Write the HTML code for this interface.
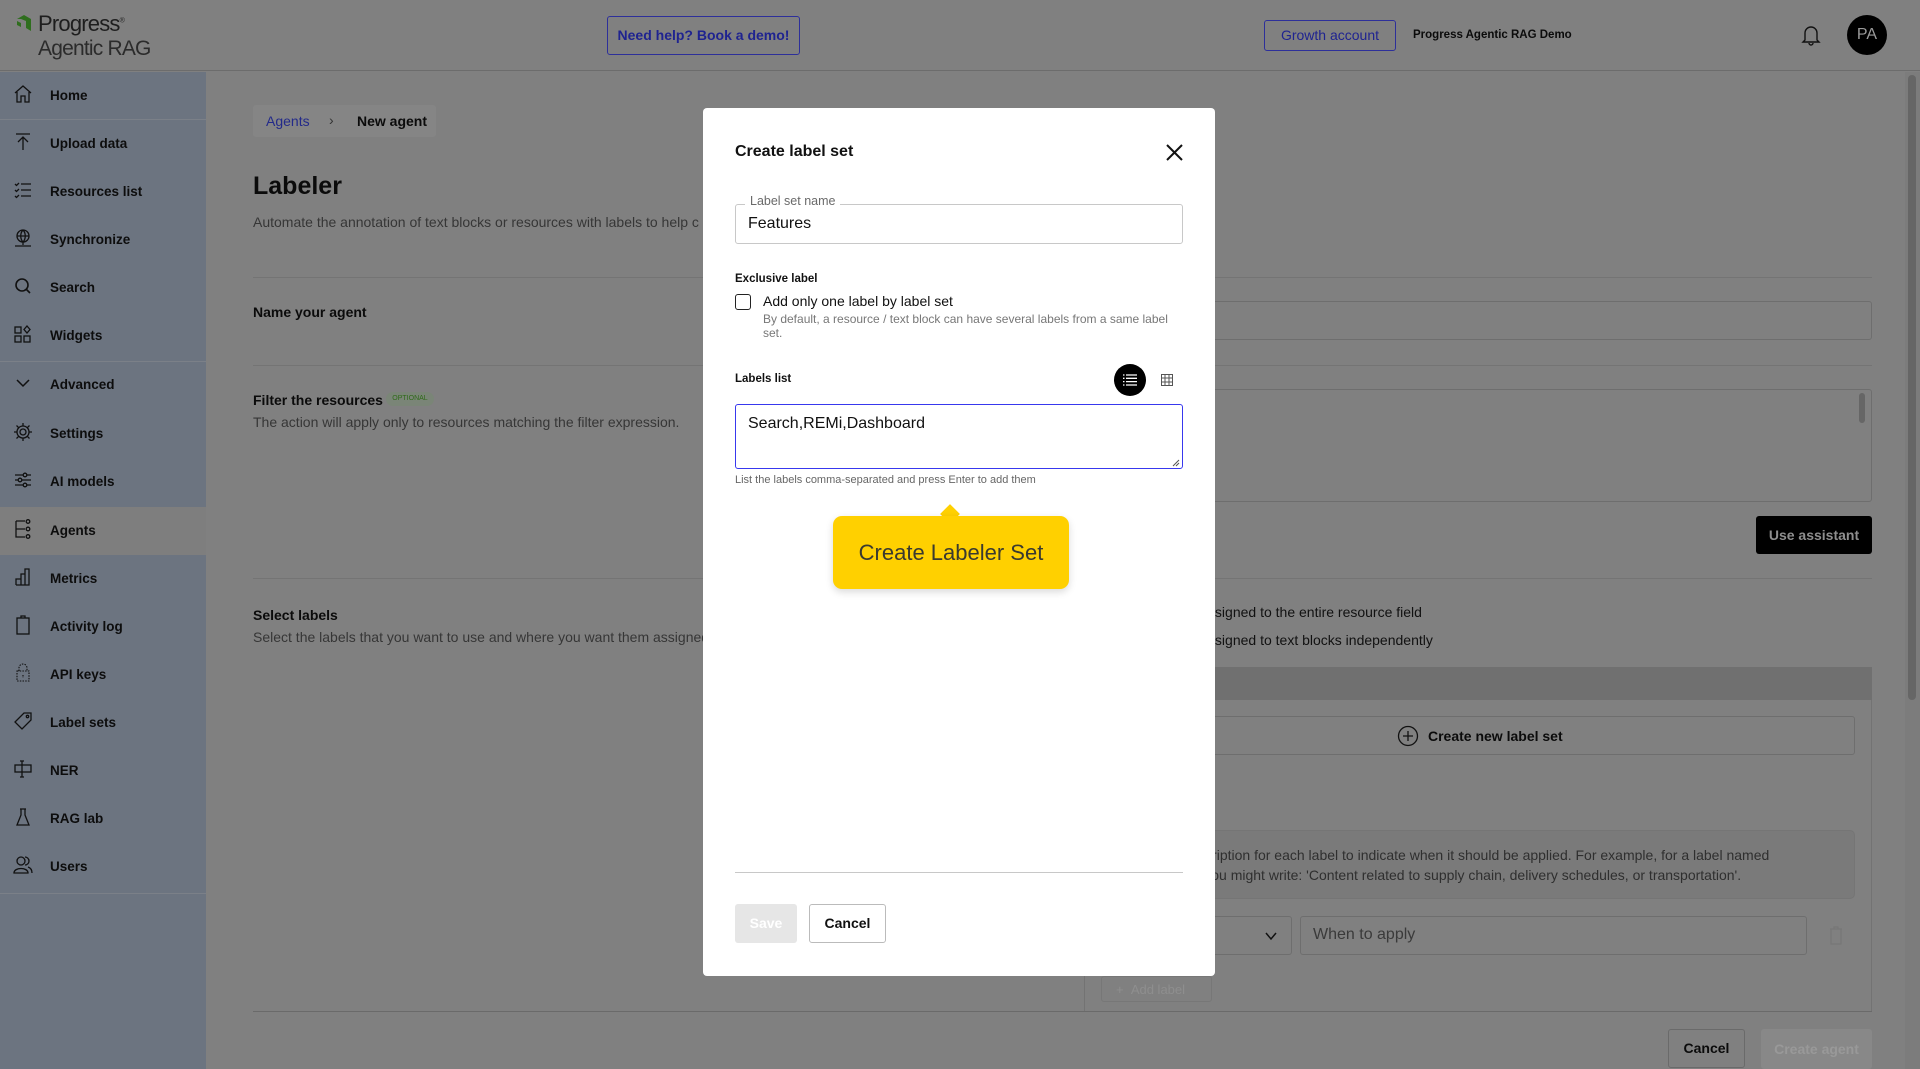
<!DOCTYPE html>
<html><head><meta charset="utf-8"><style>
*{box-sizing:border-box;margin:0;padding:0}
body{width:1920px;height:1069px;overflow:hidden;background:#808080;font-family:"Liberation Sans",Arial,sans-serif;position:relative;color:#0b0b0b}
.a{position:absolute;white-space:nowrap}
.side{position:absolute;left:0;top:72px;width:206px;height:997px;background:#6c7480}
.item{position:absolute;left:0;width:206px;height:48px;font-size:13.5px;font-weight:bold;color:#0d0d0d}
.item span{position:absolute;left:50px;top:16px}
.item svg{position:absolute;left:13px;top:12px}
.hl{position:absolute;left:0;width:206px;height:1px;background:#7b8088}
.btn{position:absolute;border-radius:3px;font-size:14px;font-weight:bold;text-align:center}
</style></head><body>
<div class="a" style="left:0;top:0;width:1920px;height:71px;border-bottom:1px solid #6c6c6c;background:#808080"></div>
<svg class="a" style="left:14px;top:11px" width="22" height="22" viewBox="0 0 22 22"><path d="M3 8 L10 4 L17 8 L17 20 L12 17 L12 10 L7 8 Z" fill="#2f6e1e"/><path d="M3 10 L7 12 L7 16 L3 14Z" fill="#2f6e1e"/></svg>
<div class="a" style="left:38px;top:11px;font-size:22px;color:#1e1e1e;letter-spacing:-0.8px">Progress<sup style="font-size:7px">®</sup></div>
<div class="a" style="left:38px;top:37px;font-size:21px;color:#2b2b2b;letter-spacing:-0.8px">Agentic RAG</div>
<div class="btn" style="left:607px;top:16px;width:193px;height:39px;border:1px solid #2d2f9a;color:#1f2390;line-height:37px;font-size:14px">Need help? Book a demo!</div>
<div class="btn" style="left:1264px;top:20px;width:132px;height:31px;border:1px solid #2d2f9a;color:#1f2390;line-height:29px;font-size:14px;font-weight:normal">Growth account</div>
<div class="a" style="left:1413px;top:29px;font-size:11.5px;font-weight:bold">Progress Agentic RAG Demo</div>
<svg class="a" style="left:1801px;top:24px" width="20" height="22" viewBox="0 0 20 22"><path d="M4 16 V9 a6 6 0 0 1 12 0 V16 L18 18 H2 Z M8 19 a2 2 0 0 0 4 0" fill="none" stroke="#111" stroke-width="1.4"/></svg>
<div class="a" style="left:1847px;top:15px;width:40px;height:40px;border-radius:50%;background:#000;color:#9a9a9a;font-size:16px;text-align:center;line-height:40px">PA</div>
<div class="side"></div>
<div class="a" style="left:0;top:507px;width:206px;height:48px;background:#7e7e7e"></div>
<div class="hl" style="top:119px"></div><div class="hl" style="top:361px"></div><div class="hl" style="top:893px"></div>
<div class="item" style="top:72px"><svg width="20" height="20" viewBox="0 0 20 20" fill="none" stroke="#111" stroke-width="1.3"><path d="M2 9 L10 2 L18 9 M4 8 V18 H8 V12 H12 V18 H16 V8"/></svg><span>Home</span></div>
<div class="item" style="top:120px"><svg width="20" height="20" viewBox="0 0 20 20" fill="none" stroke="#111" stroke-width="1.3"><path d="M3 2 H17 M10 18 V5 M5 10 L10 5 L15 10"/></svg><span>Upload data</span></div>
<div class="item" style="top:168px"><svg width="20" height="20" viewBox="0 0 20 20" fill="none" stroke="#111" stroke-width="1.3"><path d="M8 4 H18 M8 10 H18 M8 16 H18 M2 4 L3.5 5.5 L6 3 M2 10 L3.5 11.5 L6 9 M2 16 L3.5 17.5 L6 15"/></svg><span>Resources list</span></div>
<div class="item" style="top:216px"><svg width="20" height="20" viewBox="0 0 20 20" fill="none" stroke="#111" stroke-width="1.3"><circle cx="10" cy="8" r="6"/><path d="M4 8 H16 M10 2 C7 5 7 11 10 14 C13 11 13 5 10 2 M10 14 V17 M2 18 H18"/></svg><span>Synchronize</span></div>
<div class="item" style="top:264px"><svg width="20" height="20" viewBox="0 0 20 20" fill="none" stroke="#111" stroke-width="1.6"><circle cx="9" cy="9" r="6"/><path d="M13 13 L17 17"/></svg><span>Search</span></div>
<div class="item" style="top:312px"><svg width="20" height="20" viewBox="0 0 20 20" fill="none" stroke="#111" stroke-width="1.3"><rect x="2" y="3" width="6" height="6"/><rect x="2" y="12" width="6" height="6"/><rect x="11" y="12" width="6" height="6"/><path d="M14 2 L17 5.5 L14 9 L11 5.5Z"/></svg><span>Widgets</span></div>
<div class="item" style="top:361px"><svg width="20" height="20" viewBox="0 0 20 20" fill="none" stroke="#111" stroke-width="1.5"><path d="M4 7 L10 13 L16 7"/></svg><span>Advanced</span></div>
<div class="item" style="top:410px"><svg width="20" height="20" viewBox="0 0 20 20" fill="none" stroke="#111" stroke-width="1.3"><circle cx="10" cy="10" r="3"/><path d="M10 1 V4 M10 16 V19 M1 10 H4 M16 10 H19 M3.5 3.5 L5.7 5.7 M14.3 14.3 L16.5 16.5 M3.5 16.5 L5.7 14.3 M14.3 5.7 L16.5 3.5"/><circle cx="10" cy="10" r="6"/></svg><span>Settings</span></div>
<div class="item" style="top:458px"><svg width="20" height="20" viewBox="0 0 20 20" fill="none" stroke="#111" stroke-width="1.3"><path d="M2 5 H18 M2 10 H18 M2 15 H18"/><circle cx="12" cy="5" r="1.8" fill="#6c7480"/><circle cx="7" cy="10" r="1.8" fill="#6c7480"/><circle cx="12" cy="15" r="1.8" fill="#6c7480"/></svg><span>AI models</span></div>
<div class="item" style="top:507px"><svg width="20" height="20" viewBox="0 0 20 20" fill="none" stroke="#111" stroke-width="1.3"><path d="M3 2 V18 H12 M3 2 H12 M3 10 H12"/><circle cx="15" cy="2.5" r="1.8"/><circle cx="15" cy="10" r="1.8"/><circle cx="15" cy="17.5" r="1.8"/></svg><span>Agents</span></div>
<div class="item" style="top:555px"><svg width="20" height="20" viewBox="0 0 20 20" fill="none" stroke="#111" stroke-width="1.3"><path d="M3 18 V12 H8 V18 M8 18 V7 H12 V18 M12 18 V2 H16 V18 H3"/></svg><span>Metrics</span></div>
<div class="item" style="top:603px"><svg width="20" height="20" viewBox="0 0 20 20" fill="none" stroke="#111" stroke-width="1.3"><rect x="4" y="3" width="12" height="16"/><path d="M8 3 V1 H12 V3"/></svg><span>Activity log</span></div>
<div class="item" style="top:651px"><svg width="20" height="20" viewBox="0 0 20 20" fill="none" stroke="#111" stroke-width="1.1" stroke-dasharray="1.5 1.2"><rect x="4" y="8" width="12" height="10"/><path d="M6 8 V5 a4 4 0 0 1 8 0 V8 M10 12 V15"/></svg><span>API keys</span></div>
<div class="item" style="top:699px"><svg width="20" height="20" viewBox="0 0 20 20" fill="none" stroke="#111" stroke-width="1.3"><path d="M11 2 L18 2 L18 9 L9 18 L2 11 Z"/><circle cx="14.5" cy="5.5" r="1.2"/></svg><span>Label sets</span></div>
<div class="item" style="top:747px"><svg width="20" height="20" viewBox="0 0 20 20" fill="none" stroke="#111" stroke-width="1.3"><rect x="2" y="6" width="16" height="7"/><path d="M9 2 V18 M7 2 H11 M7 18 H11"/></svg><span>NER</span></div>
<div class="item" style="top:795px"><svg width="20" height="20" viewBox="0 0 20 20" fill="none" stroke="#111" stroke-width="1.3"><path d="M8 2 V8 L4 18 H16 L12 8 V2 M7 2 H13"/></svg><span>RAG lab</span></div>
<div class="item" style="top:843px"><svg width="20" height="20" viewBox="0 0 20 20" fill="none" stroke="#111" stroke-width="1.3"><circle cx="8" cy="6" r="4"/><path d="M1 18 C1 12 15 12 15 18 Z M12 2 a4 4 0 0 1 0 8 M15 12 C18 13 19 15 19 18"/></svg><span>Users</span></div>
<div class="a" style="left:253px;top:105px;width:183px;height:32px;background:#858585;border-radius:3px"></div>
<div class="a" style="left:266px;top:113px;font-size:14px;color:#232a8a">Agents</div>
<div class="a" style="left:329px;top:112px;font-size:14px;color:#333">›</div>
<div class="a" style="left:357px;top:113px;font-size:14px;font-weight:bold">New agent</div>
<div class="a" style="left:253px;top:172px;font-size:25px;font-weight:bold">Labeler</div>
<div class="a" style="left:253px;top:214px;font-size:14px;color:#363636">Automate the annotation of text blocks or resources with labels to help c</div>
<div class="a" style="left:253px;top:277px;width:1619px;height:1px;background:#747474"></div>
<div class="a" style="left:253px;top:304px;font-size:14px;font-weight:bold">Name your agent</div>
<div class="a" style="left:1210px;top:301px;width:662px;height:39px;border:1px solid #6e6e6e;border-radius:3px"></div>
<div class="a" style="left:253px;top:365px;width:1619px;height:1px;background:#747474"></div>
<div class="a" style="left:253px;top:392px;font-size:14px;font-weight:bold">Filter the resources</div>
<div class="a" style="left:386px;top:392px;width:48px;height:14px;border-radius:7px;background:#7a8577;color:#2f6a1a;font-size:7px;text-align:center;line-height:14px">OPTIONAL</div>
<div class="a" style="left:253px;top:414px;font-size:14px;color:#363636">The action will apply only to resources matching the filter expression.</div>
<div class="a" style="left:1210px;top:389px;width:662px;height:113px;border:1px solid #6e6e6e;border-radius:3px"></div>
<div class="a" style="left:1859px;top:393px;width:6px;height:30px;border-radius:3px;background:#666"></div>
<div class="btn" style="left:1756px;top:516px;width:116px;height:38px;background:#000;color:#8e8e8e;line-height:38px">Use assistant</div>
<div class="a" style="left:253px;top:578px;width:1619px;height:1px;background:#747474"></div>
<div class="a" style="left:253px;top:607px;font-size:14px;font-weight:bold">Select labels</div>
<div class="a" style="left:253px;top:629px;font-size:14px;color:#363636">Select the labels that you want to use and where you want them assigned</div>
<div class="a" style="left:1155px;top:604px;font-size:14px;color:#111">Labels assigned to the entire resource field</div>
<div class="a" style="left:1155px;top:632px;font-size:14px;color:#111">Labels assigned to text blocks independently</div>
<div class="a" style="left:1084px;top:667px;width:788px;height:33px;background:#707070"></div>
<div class="a" style="left:1084px;top:700px;width:788px;height:311px;border-left:1px solid #737373;border-right:1px solid #737373"></div>
<div class="a" style="left:1098px;top:716px;width:757px;height:39px;border:1px solid #6e6e6e;border-radius:3px"></div>
<svg class="a" style="left:1397px;top:725px" width="22" height="22" viewBox="0 0 22 22" fill="none" stroke="#111" stroke-width="1.3"><circle cx="11" cy="11" r="9.5"/><path d="M11 6 V16 M6 11 H16"/></svg>
<div class="a" style="left:1428px;top:728px;font-size:14px;font-weight:bold">Create new label set</div>
<div class="a" style="left:1098px;top:830px;width:757px;height:69px;background:#7a7a7a;border:1px solid #757575;border-radius:5px"></div>
<div class="a" style="left:1142px;top:847px;font-size:14px;color:#2f2f2f">Add a description for each label to indicate when it should be applied. For example, for a label named</div>
<div class="a" style="left:1142px;top:867px;font-size:14px;color:#2f2f2f">Logistics, you might write: 'Content related to supply chain, delivery schedules, or transportation'.</div>
<div class="a" style="left:1100px;top:916px;width:192px;height:39px;border:1px solid #6e6e6e;border-radius:3px"></div>
<svg class="a" style="left:1264px;top:929px" width="14" height="14" viewBox="0 0 14 14" fill="none" stroke="#111" stroke-width="1.5"><path d="M2 4 L7 10 L12 4"/></svg>
<div class="a" style="left:1300px;top:916px;width:507px;height:39px;border:1px solid #6e6e6e;border-radius:3px"></div>
<div class="a" style="left:1313px;top:926px;font-size:16px;color:#3a3a3a">When to apply</div>
<svg class="a" style="left:1829px;top:925px" width="14" height="20" viewBox="0 0 14 20" fill="none" stroke="#777" stroke-width="1.2"><path d="M1 4 H13 M5 4 V2 H9 V4 M2 4 V19 H12 V4"/></svg>
<div class="a" style="left:1101px;top:976px;width:111px;height:26px;border:1px solid #777;border-radius:3px;color:#8e8e8e;font-size:13px;padding:5px 0 0 14px">+ &nbsp;Add label</div>
<div class="a" style="left:253px;top:1011px;width:1619px;height:1px;background:#6a6a6a"></div>
<div class="btn" style="left:1668px;top:1029px;width:77px;height:39px;border:1px solid #6a6a6a;line-height:37px">Cancel</div>
<div class="btn" style="left:1761px;top:1029px;width:111px;height:40px;background:#888;color:#999;line-height:40px">Create agent</div>
<div class="a" style="left:1905px;top:72px;width:15px;height:997px;background:#7c7c7c"></div>
<div class="a" style="left:1908px;top:75px;width:8px;height:625px;border-radius:4px;background:#666"></div>
<div class="a" style="left:703px;top:108px;width:512px;height:868px;background:#fff;border-radius:4px"></div>
<div class="a" style="left:735px;top:143px;font-size:16px;font-weight:bold;color:#111">Create label set</div>
<svg class="a" style="left:1166px;top:144px" width="17" height="17" viewBox="0 0 17 17" stroke="#111" stroke-width="2"><path d="M1 1 L16 16 M16 1 L1 16"/></svg>
<div class="a" style="left:735px;top:204px;width:448px;height:40px;border:1px solid #c8c8c8;border-radius:3px"></div>
<div class="a" style="left:745px;top:194px;background:#fff;padding:0 5px;font-size:12.5px;color:#6a6a6a">Label set name</div>
<div class="a" style="left:748px;top:215px;font-size:16px;color:#111">Features</div>
<div class="a" style="left:735px;top:273px;font-size:11.5px;font-weight:bold;color:#111">Exclusive label</div>
<div class="a" style="left:735px;top:294px;width:16px;height:16px;border:1.5px solid #222;border-radius:3px"></div>
<div class="a" style="left:763px;top:293px;font-size:14px;color:#111">Add only one label by label set</div>
<div class="a" style="left:763px;top:312px;font-size:12px;color:#777;line-height:14px;white-space:normal;width:410px">By default, a resource / text block can have several labels from a same label set.</div>
<div class="a" style="left:735px;top:373px;font-size:11.5px;font-weight:bold;color:#111">Labels list</div>
<div class="a" style="left:1114px;top:364px;width:32px;height:32px;border-radius:50%;background:#000"></div>
<svg class="a" style="left:1122px;top:373px" width="16" height="14" viewBox="0 0 16 14" stroke="#fff" stroke-width="1.3"><path d="M1 2 H2.5 M4 2 H15 M1 5.3 H2.5 M4 5.3 H15 M1 8.6 H2.5 M4 8.6 H15 M1 12 H2.5 M4 12 H15"/></svg>
<svg class="a" style="left:1161px;top:374px" width="12" height="12" viewBox="0 0 12 12" fill="none" stroke="#555" stroke-width="1"><rect x="0.5" y="0.5" width="11" height="11"/><path d="M0.5 4 H11.5 M0.5 8 H11.5 M4 0.5 V11.5 M8 0.5 V11.5"/></svg>
<div class="a" style="left:735px;top:404px;width:448px;height:65px;border:1.5px solid #3838ee;border-radius:3px"></div>
<div class="a" style="left:748px;top:415px;font-size:16px;color:#111">Search,REMi,Dashboard</div>
<svg class="a" style="left:1172px;top:459px" width="8" height="8" viewBox="0 0 8 8" stroke="#555" stroke-width="1"><path d="M7 1 L1 7 M7 4 L4 7"/></svg>
<div class="a" style="left:735px;top:474px;font-size:11px;color:#666">List the labels comma-separated and press Enter to add them</div>
<div class="a" style="left:943px;top:507px;width:14px;height:14px;background:#ffd000;transform:rotate(45deg)"></div>
<div class="a" style="left:833px;top:516px;width:236px;height:73px;background:#ffd000;border-radius:9px;box-shadow:0 3px 8px rgba(0,0,0,0.15);font-size:22px;color:#3a3a30;text-align:center;line-height:73px">Create Labeler Set</div>
<div class="a" style="left:735px;top:872px;width:448px;height:1px;background:#c8c8c8"></div>
<div class="btn" style="left:735px;top:904px;width:62px;height:39px;background:#e6e6e6;color:#fff;line-height:39px">Save</div>
<div class="btn" style="left:809px;top:904px;width:77px;height:39px;border:1px solid #bbb;color:#111;line-height:37px">Cancel</div>
</body></html>
